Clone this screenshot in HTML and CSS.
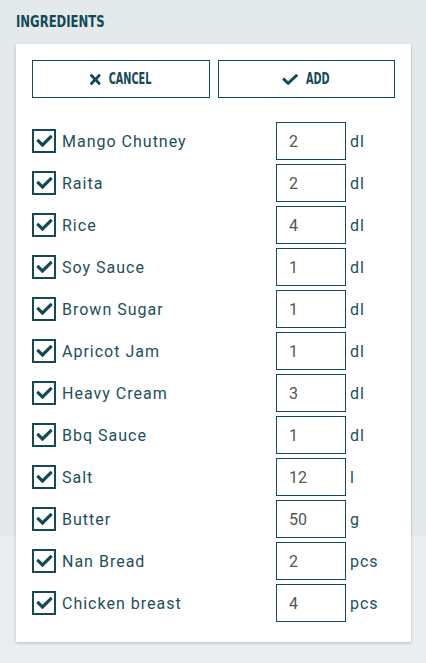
FILE: index.html
```html
<!DOCTYPE html>
<html lang="en">
<head>
<meta charset="utf-8">
<title>Ingredients</title>
<link rel="stylesheet" href="styles.css">
</head>
<body>
<h2 class="heading"><span class="heading-text">INGREDIENTS</span></h2>
<div class="card">
  <div class="actions">
    <button class="btn" type="button">
      <span class="btn-inner">
        <svg class="btn-icon x-icon" viewBox="0 80 352 352" preserveAspectRatio="none" aria-hidden="true"><path d="M242.72 256l100.07-100.07c12.28-12.28 12.28-32.19 0-44.48l-22.24-22.24c-12.28-12.28-32.19-12.28-44.48 0L176 189.28 75.93 89.21c-12.28-12.28-32.19-12.28-44.48 0L9.21 111.45c-12.28 12.28-12.28 32.19 0 44.48L109.28 256 9.21 356.07c-12.28 12.28-12.28 32.19 0 44.48l22.24 22.24c12.28 12.28 32.2 12.28 44.48 0L176 322.72l100.07 100.07c12.28 12.28 32.2 12.28 44.48 0l22.24-22.24c12.28-12.28 12.28-32.19 0-44.48L242.72 256z"/></svg>
        <span class="btn-label">CANCEL</span>
      </span>
    </button>
    <button class="btn" type="button">
      <span class="btn-inner">
        <svg class="btn-icon check-icon" viewBox="0 65 512 382" preserveAspectRatio="none" aria-hidden="true"><path d="M173.9 439.4l-166.4-166.4c-10-10-10-26.2 0-36.2l36.2-36.2c10-10 26.2-10 36.2 0L192 312.7 432.1 72.6c10-10 26.2-10 36.2 0l36.2 36.2c10 10 10 26.2 0 36.2l-294.4 294.4c-10 10-26.2 10-36.2 0z"/></svg>
        <span class="btn-label">ADD</span>
      </span>
    </button>
  </div>
  <ul class="list">
    <li class="row"><span class="box"><svg viewBox="0 65 512 382"><path d="M173.9 439.4l-166.4-166.4c-10-10-10-26.2 0-36.2l36.2-36.2c10-10 26.2-10 36.2 0L192 312.7 432.1 72.6c10-10 26.2-10 36.2 0l36.2 36.2c10 10 10 26.2 0 36.2l-294.4 294.4c-10 10-26.2 10-36.2 0z"/></svg></span><span class="name">Mango Chutney</span><span class="qty">2</span><span class="unit">dl</span></li>
    <li class="row"><span class="box"><svg viewBox="0 65 512 382"><path d="M173.9 439.4l-166.4-166.4c-10-10-10-26.2 0-36.2l36.2-36.2c10-10 26.2-10 36.2 0L192 312.7 432.1 72.6c10-10 26.2-10 36.2 0l36.2 36.2c10 10 10 26.2 0 36.2l-294.4 294.4c-10 10-26.2 10-36.2 0z"/></svg></span><span class="name">Raita</span><span class="qty">2</span><span class="unit">dl</span></li>
    <li class="row"><span class="box"><svg viewBox="0 65 512 382"><path d="M173.9 439.4l-166.4-166.4c-10-10-10-26.2 0-36.2l36.2-36.2c10-10 26.2-10 36.2 0L192 312.7 432.1 72.6c10-10 26.2-10 36.2 0l36.2 36.2c10 10 10 26.2 0 36.2l-294.4 294.4c-10 10-26.2 10-36.2 0z"/></svg></span><span class="name">Rice</span><span class="qty">4</span><span class="unit">dl</span></li>
    <li class="row"><span class="box"><svg viewBox="0 65 512 382"><path d="M173.9 439.4l-166.4-166.4c-10-10-10-26.2 0-36.2l36.2-36.2c10-10 26.2-10 36.2 0L192 312.7 432.1 72.6c10-10 26.2-10 36.2 0l36.2 36.2c10 10 10 26.2 0 36.2l-294.4 294.4c-10 10-26.2 10-36.2 0z"/></svg></span><span class="name">Soy Sauce</span><span class="qty">1</span><span class="unit">dl</span></li>
    <li class="row"><span class="box"><svg viewBox="0 65 512 382"><path d="M173.9 439.4l-166.4-166.4c-10-10-10-26.2 0-36.2l36.2-36.2c10-10 26.2-10 36.2 0L192 312.7 432.1 72.6c10-10 26.2-10 36.2 0l36.2 36.2c10 10 10 26.2 0 36.2l-294.4 294.4c-10 10-26.2 10-36.2 0z"/></svg></span><span class="name">Brown Sugar</span><span class="qty">1</span><span class="unit">dl</span></li>
    <li class="row"><span class="box"><svg viewBox="0 65 512 382"><path d="M173.9 439.4l-166.4-166.4c-10-10-10-26.2 0-36.2l36.2-36.2c10-10 26.2-10 36.2 0L192 312.7 432.1 72.6c10-10 26.2-10 36.2 0l36.2 36.2c10 10 10 26.2 0 36.2l-294.4 294.4c-10 10-26.2 10-36.2 0z"/></svg></span><span class="name">Apricot Jam</span><span class="qty">1</span><span class="unit">dl</span></li>
    <li class="row"><span class="box"><svg viewBox="0 65 512 382"><path d="M173.9 439.4l-166.4-166.4c-10-10-10-26.2 0-36.2l36.2-36.2c10-10 26.2-10 36.2 0L192 312.7 432.1 72.6c10-10 26.2-10 36.2 0l36.2 36.2c10 10 10 26.2 0 36.2l-294.4 294.4c-10 10-26.2 10-36.2 0z"/></svg></span><span class="name">Heavy Cream</span><span class="qty">3</span><span class="unit">dl</span></li>
    <li class="row"><span class="box"><svg viewBox="0 65 512 382"><path d="M173.9 439.4l-166.4-166.4c-10-10-10-26.2 0-36.2l36.2-36.2c10-10 26.2-10 36.2 0L192 312.7 432.1 72.6c10-10 26.2-10 36.2 0l36.2 36.2c10 10 10 26.2 0 36.2l-294.4 294.4c-10 10-26.2 10-36.2 0z"/></svg></span><span class="name">Bbq Sauce</span><span class="qty">1</span><span class="unit">dl</span></li>
    <li class="row"><span class="box"><svg viewBox="0 65 512 382"><path d="M173.9 439.4l-166.4-166.4c-10-10-10-26.2 0-36.2l36.2-36.2c10-10 26.2-10 36.2 0L192 312.7 432.1 72.6c10-10 26.2-10 36.2 0l36.2 36.2c10 10 10 26.2 0 36.2l-294.4 294.4c-10 10-26.2 10-36.2 0z"/></svg></span><span class="name">Salt</span><span class="qty">12</span><span class="unit">l</span></li>
    <li class="row"><span class="box"><svg viewBox="0 65 512 382"><path d="M173.9 439.4l-166.4-166.4c-10-10-10-26.2 0-36.2l36.2-36.2c10-10 26.2-10 36.2 0L192 312.7 432.1 72.6c10-10 26.2-10 36.2 0l36.2 36.2c10 10 10 26.2 0 36.2l-294.4 294.4c-10 10-26.2 10-36.2 0z"/></svg></span><span class="name">Butter</span><span class="qty">50</span><span class="unit">g</span></li>
    <li class="row"><span class="box"><svg viewBox="0 65 512 382"><path d="M173.9 439.4l-166.4-166.4c-10-10-10-26.2 0-36.2l36.2-36.2c10-10 26.2-10 36.2 0L192 312.7 432.1 72.6c10-10 26.2-10 36.2 0l36.2 36.2c10 10 10 26.2 0 36.2l-294.4 294.4c-10 10-26.2 10-36.2 0z"/></svg></span><span class="name">Nan Bread</span><span class="qty">2</span><span class="unit">pcs</span></li>
    <li class="row"><span class="box"><svg viewBox="0 65 512 382"><path d="M173.9 439.4l-166.4-166.4c-10-10-10-26.2 0-36.2l36.2-36.2c10-10 26.2-10 36.2 0L192 312.7 432.1 72.6c10-10 26.2-10 36.2 0l36.2 36.2c10 10 10 26.2 0 36.2l-294.4 294.4c-10 10-26.2 10-36.2 0z"/></svg></span><span class="name">Chicken breast</span><span class="qty">4</span><span class="unit">pcs</span></li>
  </ul>
</div>
</body>
</html>
```
FILE: styles.css
```css
html {
  background: #ebeef0;
}
body {
  margin: 0;
  min-height: 663px;
  background: linear-gradient(to bottom, #e4e9ec 0, #e4e9ec 536px, #ebeef0 536px);
  font-family: Roboto, "Liberation Sans", sans-serif;
  color: #1d4f5b;
}
.heading {
  margin: 0;
  padding: 12px 16px 12px;
  font-family: "DejaVu Sans Condensed", "DejaVu Sans", sans-serif;
  font-stretch: condensed;
  font-weight: 700;
  font-size: 16px;
  line-height: 20px;
  color: #134a57;
}
.heading-text {
  display: inline-block;
  transform: scaleX(0.81);
  transform-origin: left center;
}
.card {
  width: 395px;
  margin-left: 16px;
  box-sizing: border-box;
  padding: 16px 16px 20px;
  background: #fff;
  box-shadow: 0 1px 3px rgba(0, 0, 0, 0.22);
}
.actions {
  display: grid;
  grid-template-columns: 1fr 1fr;
  column-gap: 8px;
}
.btn {
  height: 38px;
  margin: 0;
  padding: 0;
  border: 1px solid #124a56;
  background: #fff;
  display: flex;
  align-items: center;
  justify-content: center;
  color: #134a57;
  font-family: "DejaVu Sans Condensed", "DejaVu Sans", sans-serif;
  font-stretch: condensed;
  font-weight: 700;
  font-size: 15px;
  line-height: 1;
}
.btn-inner {
  display: flex;
  align-items: center;
  gap: 11px;
  transform: scaleX(0.72);
}
.btn-icon {
  fill: #134a57;
  display: block;
}
.x-icon {
  width: 15px;
  height: 11px;
}
.check-icon {
  width: 22px;
  height: 11px;
}
.list {
  list-style: none;
  margin: 24px 0 0;
  padding: 0;
  display: flex;
  flex-direction: column;
  gap: 4px;
}
.row {
  display: flex;
  align-items: center;
  height: 38px;
  font-size: 16px;
}
.box {
  width: 24px;
  height: 24px;
  box-sizing: border-box;
  border: 2px solid #134a57;
  display: flex;
  align-items: center;
  justify-content: center;
  margin-right: 6px;
  flex: none;
}
.box svg {
  width: 17px;
  height: 12px;
  fill: #134a57;
  display: block;
}
.name {
  flex: 1;
  color: #1d4f5b;
  letter-spacing: 1px;
}
.qty {
  width: 70px;
  height: 38px;
  box-sizing: border-box;
  border: 1px solid #124a56;
  padding-left: 12px;
  display: flex;
  align-items: center;
  color: #555;
  flex: none;
}
.unit {
  width: 49px;
  box-sizing: border-box;
  padding-left: 4px;
  color: #1d4f5b;
  letter-spacing: 1px;
  flex: none;
}
```
